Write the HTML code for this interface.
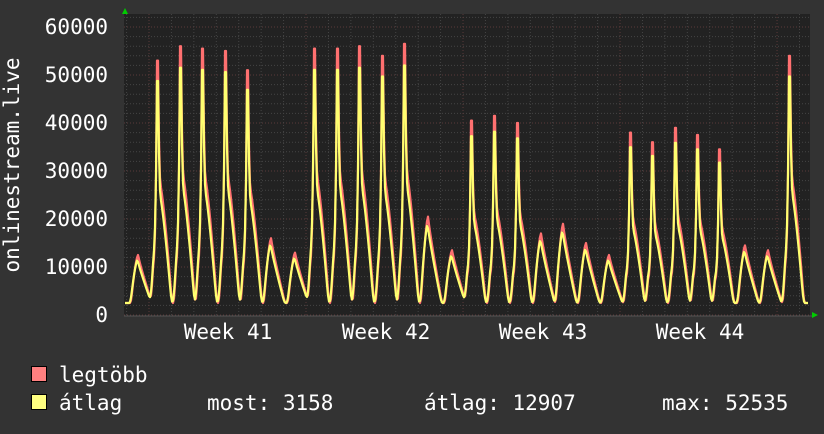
<!DOCTYPE html>
<html><head><meta charset="utf-8"><style>
body{margin:0;background:#333;width:824px;height:430px;overflow:hidden;font-family:"DejaVu Sans Mono","Liberation Mono",monospace;}
svg text{font-family:"DejaVu Sans Mono","Liberation Mono",monospace;fill:#fff;font-size:21px}
</style></head><body>
<svg id="s" width="824" height="430" xmlns="http://www.w3.org/2000/svg">
<rect width="824" height="430" fill="#333"/>
<rect x="124" y="14" width="686" height="302" fill="#222"/>
<g id="grid"></g>
<polyline id="red" fill="none" stroke="#ff7070" stroke-width="2.2" stroke-linejoin="round"/>
<polyline id="yel" fill="none" stroke="#ffff70" stroke-width="2.2" stroke-linejoin="round"/>
<line x1="124" y1="316" x2="812" y2="316" stroke="#555" stroke-width="1"/>
<polygon points="122,14 125,8 128,14" fill="#0c0"/>
<polygon points="812,312 818,315 812,318" fill="#0c0"/>
<g text-anchor="end">
<text x="108" y="34">60000</text><text x="108" y="82">50000</text><text x="108" y="130">40000</text>
<text x="108" y="178">30000</text><text x="108" y="226">20000</text><text x="108" y="274">10000</text>
<text x="108" y="322">0</text></g>
<text transform="translate(19,165) rotate(-90)" text-anchor="middle">onlinestream.live</text>
<g text-anchor="middle"><text x="228" y="339">Week 41</text><text x="386" y="339">Week 42</text><text x="543" y="339">Week 43</text><text x="700" y="339">Week 44</text></g>
<rect x="31.5" y="366.5" width="15" height="15" fill="#ff8080" stroke="#000"/>
<rect x="31.5" y="394.5" width="15" height="15" fill="#ffff80" stroke="#000"/>
<text x="59" y="382">legtöbb</text>
<text x="59" y="410">átlag</text>
<text x="207" y="410">most: 3158</text>
<text x="424" y="410">átlag: 12907</text>
<text x="662" y="410">max: 52535</text>
</svg>
<script>
var g=document.getElementById('grid'),h='';
for(var v=0;v<=62000;v+=2000){var y=315-v*0.0048;if(y<14)break;var maj=v%10000==0;
h+='<line x1="124" x2="810" y1="'+y+'" y2="'+y+'" stroke="'+(maj?'#5a3a3a':'#444')+'" stroke-dasharray="1,2"/>';}
for(var x=149-22.43*1;x<810;x+=22.43){if(x<124)continue;var k=Math.round((x-149)/22.43);var maj=k%7==0;
h+='<line y1="14" y2="316" x1="'+x+'" x2="'+x+'" stroke="'+(maj?'#5a3a3a':'#444')+'" stroke-dasharray="1,2"/>';}
g.innerHTML=h;
var pk=[[138,12500],[158,53000],[181,56000],[203,55500],[226,55000],[248,51000],[271,16000],[295,13000],[315,55500],[338,55500],[360,56000],[383,54000],[405,56500],[428,20500],[452,13500],[472,40500],[495,41500],[518,40000],[541,17000],[563,19000],[586,15000],[609,12500],[631,38000],[653,36000],[676,39000],[698,37500],[720,34500],[745,14500],[768,13500],[790,54000]];
function val(x,f){var best=2500;for(var i=0;i<pk.length;i++){var p=pk[i][0],P=pk[i][1]*f,d=x-p,v;
if(d<-7||d>15)continue;
if(P>25000){ if(d<-4)v=2500+(d+7)/3*(P*0.2);else if(d<-1)v=P*0.2+(d+4)/3*P*0.35;else if(d<=0.6)v=P;else if(d<2)v=P*0.62;else v=(P*0.52-2500)*Math.max(0,1-Math.pow((d-2)/12,1.3))+2500;}
else {v=d<0?2500+(P-2500)*(1-Math.pow(-d/7,1.5)):2500+(P-2500)*Math.max(0,1-Math.pow(d/14,0.9));}
if(v>best)best=v;}return best;}
function pts(f,off){var a=[];for(var x=123;x<=810;x++)a.push(val(x-off,f));var s='';
for(var i=2;i<a.length-1;i++){var x=123+i;var v=Math.max(a[i],(a[i-1]+2*a[i]+a[i+1])/4);if(x>808)break;s+=x+','+(315-v*0.0048).toFixed(1)+' ';}return s;}
document.getElementById('red').setAttribute('points',pts(1,0));
document.getElementById('yel').setAttribute('points',pts(0.92,-0.5));
</script>
</body></html>
